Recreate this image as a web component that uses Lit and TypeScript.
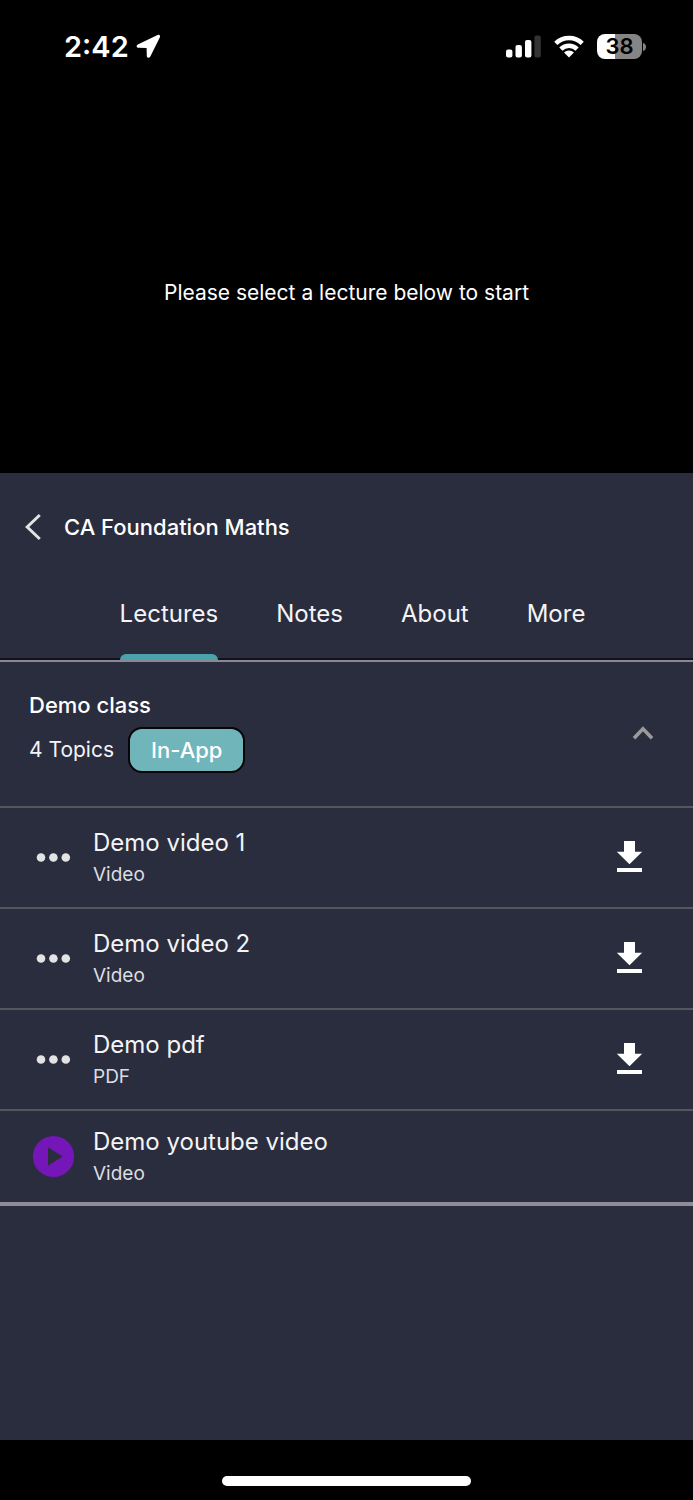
import { LitElement, html, css, svg } from "lit";
import { customElement, state } from "lit/decorators.js";

interface Topic {
  title: string;
  kind: string;
  playing?: boolean;
}

const tabs = ["Lectures", "Notes", "About", "More"];

const topics: Topic[] = [
  { title: "Demo video 1", kind: "Video" },
  { title: "Demo video 2", kind: "Video" },
  { title: "Demo pdf", kind: "PDF" },
  { title: "Demo youtube video", kind: "Video", playing: true },
];

@customElement("app-root")
export class AppRoot extends LitElement {
  @state() private tab = "Lectures";
  @state() private open = true;

  static styles = css`
    :host {
      display: flex;
      flex-direction: column;
      min-height: 100vh;
      background: #000;
      color: #f4f4f6;
      font-family: Inter, "Liberation Sans", sans-serif;
      font-size: 24px;
      line-height: 32px;
    }
    * {
      box-sizing: border-box;
    }
    svg {
      display: block;
    }
    button {
      display: block;
      margin: 0;
      padding: 0;
      border: 0;
      background: none;
      color: inherit;
      font: inherit;
      cursor: pointer;
    }
    h1,
    h2,
    p,
    ul {
      margin: 0;
      padding: 0;
      font-size: 22px;
    }
    h1,
    h2 {
      font-weight: 500;
      color: #fff;
    }
    ul {
      list-style: none;
    }
    .status {
      display: flex;
      align-items: center;
      justify-content: space-between;
      height: 93px;
      padding: 0 47px 0 64px;
      color: #fff;
    }
    .clock,
    .signals {
      display: flex;
      align-items: center;
    }
    .clock {
      gap: 7px;
      font-size: 29px;
      font-weight: 600;
    }
    .signals {
      gap: 13px;
    }
    .battery {
      display: flex;
      align-items: center;
      gap: 1px;
    }
    .charge {
      width: 45px;
      height: 25px;
      border-radius: 8px;
      background: linear-gradient(to right, #fff 39%, #858585 39%);
      color: #000;
      font-size: 22px;
      font-weight: 600;
      line-height: 25px;
      text-align: center;
    }
    .stage {
      display: flex;
      justify-content: center;
      height: 380px;
      padding: 184px 24px 0;
      text-align: center;
    }
    .stage p {
      color: #fff;
      font-size: 21px;
    }
    .panel {
      flex: 1;
      background: #2a2d3e;
    }
    .heading {
      display: flex;
      align-items: center;
      gap: 22px;
      padding: 38px 24px 40px;
    }
    .tabs {
      display: flex;
      justify-content: center;
      gap: 58px;
      padding-left: 12px;
      border-bottom: 2px solid #8b8893;
      box-shadow: inset 0 -2px #11121a;
    }
    .tab {
      height: 77px;
      padding-top: 15px;
      display: flex;
      flex-direction: column;
      justify-content: space-between;
    }
    .tab::after {
      content: "";
      height: 6px;
      width: 100%;
      border-radius: 6px 6px 0 0;
    }
    .tab.active::after {
      background: #4aa2aa;
    }
    .section {
      display: flex;
      align-items: center;
      justify-content: space-between;
      padding: 27px 36px 33px 29px;
    }
    .meta {
      display: flex;
      align-items: center;
      gap: 14px;
      margin-top: 6px;
      font-size: 21px;
    }
    .badge {
      padding: 5px 21px;
      border: 2px solid #050608;
      border-radius: 14px;
      background: #6fb5ba;
      color: #fff;
      font-size: 22px;
      font-weight: 500;
    }
    .list {
      border-bottom: 4px solid #918b98;
    }
    .row {
      display: flex;
      align-items: center;
      gap: 18px;
      min-height: 93px;
      padding: 12px 49px 12px 32px;
      border-top: 2px solid #54565f;
    }
    .row.file {
      min-height: 101px;
    }
    .text {
      flex: 1;
      padding-top: 3px;
    }
    .text p {
      font-size: 24px;
    }
    .text .kind {
      font-size: 19px;
      color: #dcdde2;
    }
    .home {
      display: flex;
      justify-content: center;
      height: 60px;
      padding-top: 36px;
    }
    .pill {
      width: 36%;
      height: 10px;
      border-radius: 5px;
      background: #fff;
    }
  `;

  private lead(playing?: boolean) {
    return html`<svg width="43" height="43" viewBox="0 0 43 43" aria-hidden="true">
      ${playing
        ? svg`<circle cx="21.5" cy="21.5" r="20.6" fill="#7416b8"/><path d="M16 12.2v18.6l14.6-9.3z" fill="#2a2d3e"/>`
        : svg`<g fill="#e3e3e3"><circle cx="9" cy="21.5" r="4.3"/><circle cx="21.4" cy="21.5" r="4.3"/><circle cx="33.8" cy="21.5" r="4.3"/></g>`}
    </svg>`;
  }

  render() {
    return html`
      <div class="status">
        <div class="clock">
          <span>2:42</span>
          <svg width="25" height="25" viewBox="0 0 25 25" fill="#fff" aria-hidden="true">
            <path d="M21.6.9 1.8 10.4c-1.8.9-1.4 3.2.6 3.3l8.2.2.2 8.2c.1 2 2.5 2.4 3.4.6L23.9 3.2c.8-1.7-.6-3.1-2.3-2.3z"/>
          </svg>
        </div>
        <div class="signals">
          <svg width="35" height="23" viewBox="0 0 35 23" fill="#fff" aria-label="Signal">
            <rect x="0" y="14.5" width="6.4" height="8" rx="2"/>
            <rect x="9.5" y="10" width="6.4" height="12.5" rx="2"/>
            <rect x="19" y="5" width="6.4" height="17.5" rx="2"/>
            <rect x="28.4" y="0.5" width="6.4" height="22" rx="2" fill="#333"/>
          </svg>
          <svg width="30" height="23" viewBox="0 0 30 23" aria-label="Wi-Fi">
            <g fill="none" stroke="#fff" stroke-width="4.6">
              <path d="M1.8 8.4a19 19 0 0 1 26.4 0"/>
              <path d="M6.9 14.2a11.4 11.4 0 0 1 16.2 0"/>
            </g>
            <path d="M15 22.6l-5-5a7 7 0 0 1 10 0z" fill="#fff"/>
          </svg>
          <div class="battery">
            <div class="charge">38</div>
            <svg width="3" height="8" viewBox="0 0 3 8" aria-hidden="true"><path d="M0 0c4 1 4 7 0 8z" fill="#858585"/></svg>
          </div>
        </div>
      </div>
      <div class="stage"><p>Please select a lecture below to start</p></div>
      <main class="panel">
        <header class="heading">
          <button aria-label="Back">
            <svg width="18" height="28" viewBox="0 0 18 28" fill="none" stroke="#e3e3e3" stroke-width="3">
              <path d="M15.8 2 3.2 14l12.6 12"/>
            </svg>
          </button>
          <h1>CA Foundation Maths</h1>
        </header>
        <nav class="tabs">
          ${tabs.map(
            (t) => html`<button class="tab ${t === this.tab ? "active" : ""}" @click=${() => (this.tab = t)}>${t}</button>`
          )}
        </nav>
        <section>
          <div class="section">
            <div>
              <h2>Demo class</h2>
              <div class="meta"><span>4 Topics</span><span class="badge">In-App</span></div>
            </div>
            <button aria-label="Toggle topics" aria-expanded=${this.open} @click=${() => (this.open = !this.open)}>
              <svg width="28" height="28" viewBox="0 0 28 28" fill="none" stroke="#9b9b9d" stroke-width="3.6">
                <path d="M5 21.2l9-9.4 9 9.4"/>
              </svg>
            </button>
          </div>
          <ul class="list" ?hidden=${!this.open}>
            ${topics.map(
              (t) => html`<li class="row ${t.playing ? "" : "file"}">
                ${this.lead(t.playing)}
                <div class="text">
                  <p>${t.title}</p>
                  <p class="kind">${t.kind}</p>
                </div>
                ${t.playing
                  ? ""
                  : html`<button aria-label="Download ${t.title}">
                      <svg width="30" height="34" viewBox="0 0 30 34" fill="#fff">
                        <path d="M10 0h11v10.7h7.2L15.5 23.3 2.8 10.7H10zM3 27h25v4H3z"/>
                      </svg>
                    </button>`}
              </li>`
            )}
          </ul>
        </section>
      </main>
      <div class="home"><div class="pill"></div></div>
    `;
  }
}
